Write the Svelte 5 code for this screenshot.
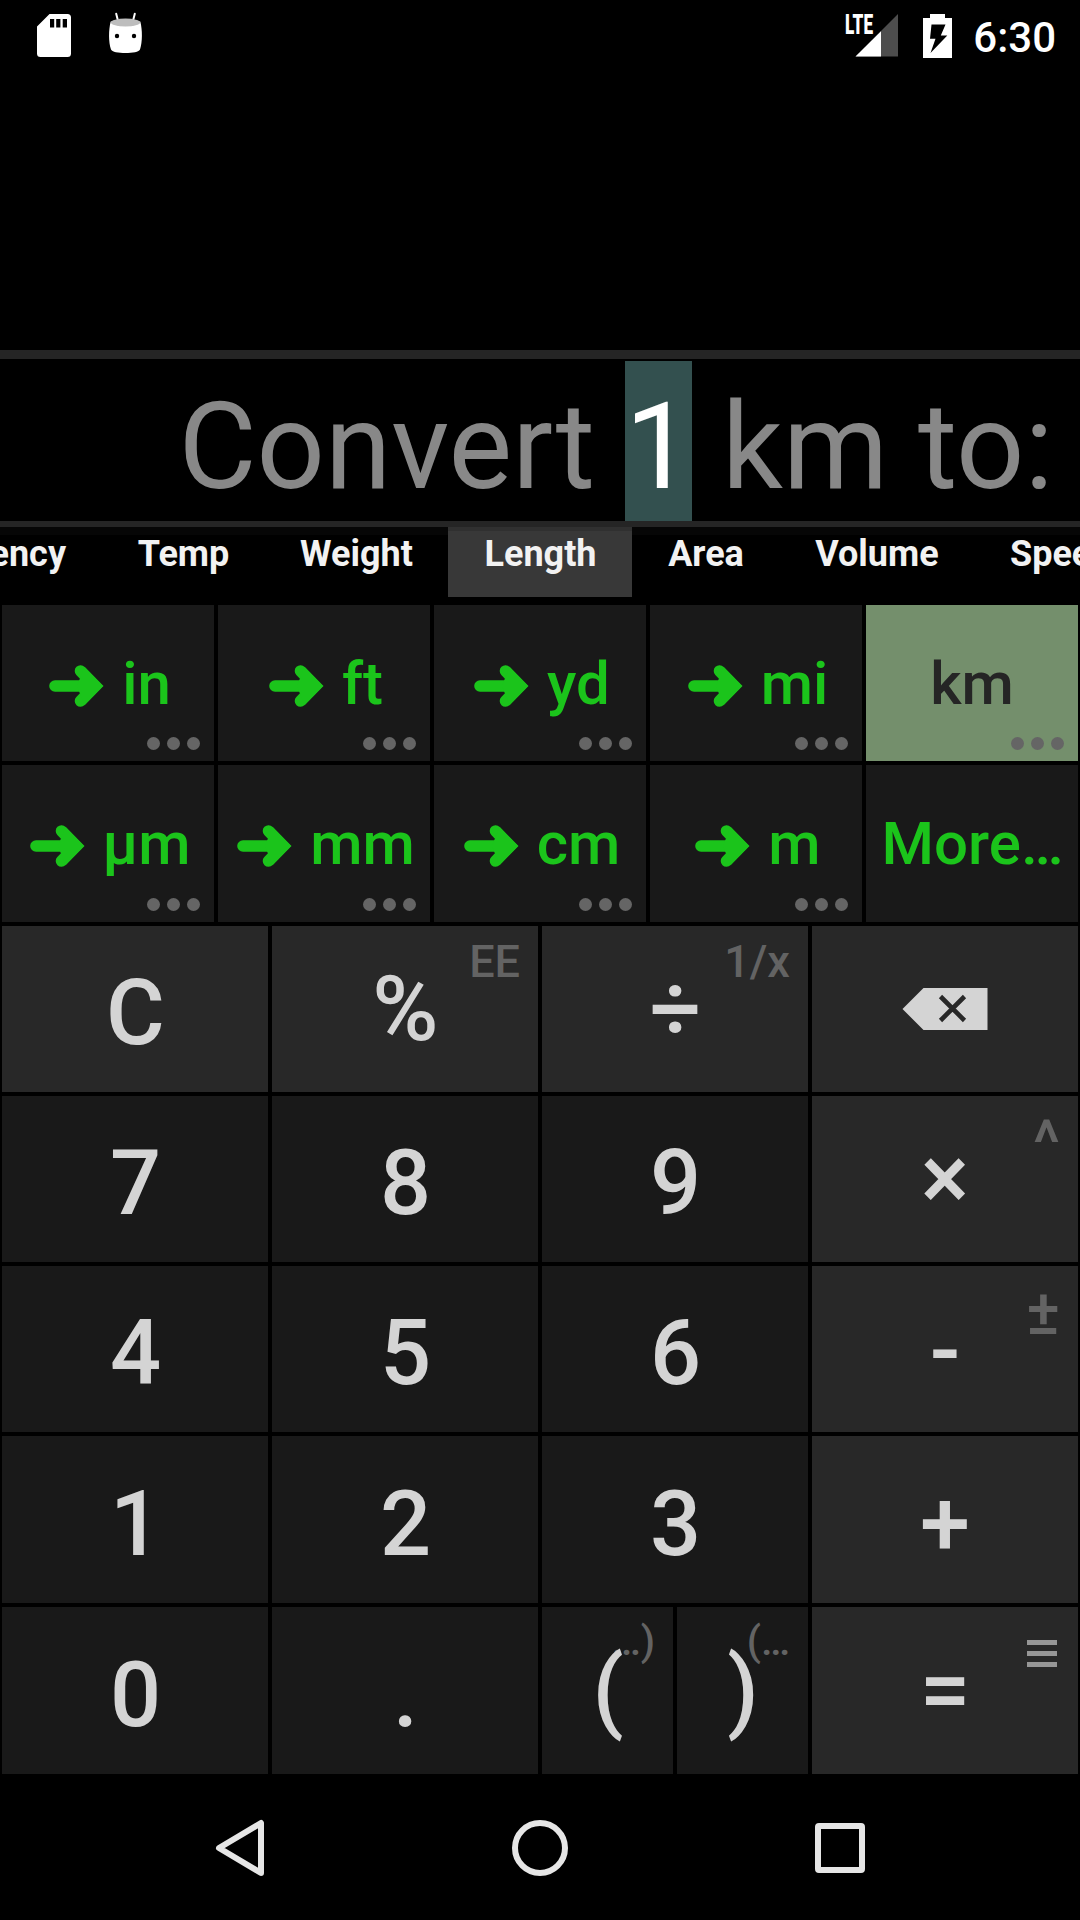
<script>
  const tabs = [
    { label: 'Currency', width: 102 },
    { label: 'Temp', width: 162 },
    { label: 'Weight', width: 184 },
    { label: 'Length', width: 184, active: true },
    { label: 'Area', width: 147 },
    { label: 'Volume', width: 195 },
    { label: 'Speed', width: 170 },
  ];

  const units = [
    { label: 'in' },
    { label: 'ft' },
    { label: 'yd' },
    { label: 'mi' },
    { label: 'km', kind: 'source' },
    { label: 'µm' },
    { label: 'mm' },
    { label: 'cm' },
    { label: 'm' },
    { label: 'More…', kind: 'more' },
  ];

  const keys = [
    { label: 'C', op: true },
    { label: '%', op: true, hint: 'EE', look: 'percent' },
    { label: '÷', op: true, hint: '1/x', look: 'divide' },
    { icon: 'backspace', op: true },
    { label: '7' },
    { label: '8' },
    { label: '9' },
    { label: '×', op: true, hint: '^', look: 'times' },
    { label: '4' },
    { label: '5' },
    { label: '6' },
    { label: '-', op: true, hint: '±', look: 'minus' },
    { label: '1' },
    { label: '2' },
    { label: '3' },
    { label: '+', op: true, look: 'plus' },
    { label: '0' },
    { label: '.' },
    { label: '(', hint: '…)', look: 'paren', half: true },
    { label: ')', hint: '(…', look: 'paren', half: true },
    { label: '=', op: true, look: 'equals', menu: true },
  ];
</script>

<div class="screen">
  <header class="status">
    <div class="notices">
      <svg class="sd" width="34" height="43" viewBox="0 0 34 43">
        <path fill="#fff" fill-rule="evenodd" d="M12.5 0H30.500a3.500 3.500 0 0 1 3.500 3.500V39.500a3.500 3.500 0 0 1-3.500 3.500H3.500A3.500 3.500 0 0 1 0 39.500V12.500ZM13 5V13.500H17.200V5ZM19.200 5V13.500H23.400V5ZM25.700 5V13.500H30V5Z" />
      </svg>
      <svg width="36" height="44" viewBox="0 0 36 44">
        <path d="M8.200 1.800 10.300 10M26.800 1.800 24.700 10" stroke="#fff" stroke-width="2" stroke-linecap="round" />
        <path fill="#fff" d="M2.700 9.500C.5 18 .5 30 3 37.500 4.500 42.300 30.500 42.300 32 37.500 34.500 30 34.500 18 32.300 9.500Z" />
        <ellipse cx="17.500" cy="10.500" rx="14.700" ry="4" fill="#bdbdbd" />
        <circle cx="9" cy="24" r="2.200" />
        <circle cx="26" cy="24" r="2.200" />
      </svg>
    </div>
    <div class="system">
      <svg width="54" height="43" viewBox="0 0 54 43">
        <path fill="#4d4d4d" d="M53 0V42.500H10.500Z" />
        <path fill="#fff" d="M36 17.300V42.500H10.500Z" />
        <text class="lte" x="0" y="20" textLength="28" lengthAdjust="spacingAndGlyphs">LTE</text>
      </svg>
      <svg class="battery" width="29" height="44" viewBox="0 0 29 44">
        <path fill="#fff" fill-rule="evenodd" d="M7 0H22V4H29V44H0V4H7ZM8.500 10.500 7 24.700H12.500L7.500 39 24.300 21.500H17.800L22.500 10.500Z" />
      </svg>
      <span class="clock">6:30</span>
    </div>
  </header>

  <section class="display">
    <span class="words">{'Convert '}</span><span class="value">1</span><span class="words">{' km to:'}</span>
  </section>

  <nav class="tabs">
    {#each tabs as tab}
      <div class="tab" class:active={tab.active} style:width="{tab.width}px"><span>{tab.label}</span></div>
    {/each}
  </nav>

  <section class="units">
    {#each units as unit}
      <div class="unit {unit.kind ?? 'target'}">
        {#if !unit.kind}
          <svg class="arrow" width="55" height="42" viewBox="0 0 55 42">
            <path d="M6 21H42M31.500 6 46 21 31.500 36" fill="none" stroke="#1bc41b" stroke-width="11.600" stroke-linecap="round" />
            <path d="M35.500 1.800 54.500 21 35.500 40.200 28 21Z" fill="#1bc41b" />
          </svg>
        {/if}
        <span>{unit.label}</span>
        {#if unit.kind !== 'more'}
          <div class="dots"><i></i><i></i><i></i></div>
        {/if}
      </div>
    {/each}
  </section>

  <section class="keys">
    {#each keys as key}
      <div class="key {key.look ?? ''}" class:op={key.op} class:half={key.half}>
        {#if key.hint}<span class="hint">{key.hint}</span>{/if}
        {#if key.menu}<div class="menu"><i></i><i></i><i></i></div>{/if}
        {#if key.icon}
          <svg width="86" height="42" viewBox="0 0 86 42">
            <path fill="#d4d4d4" d="M21.500 0H85.500V42H21.500L.5 21Z" />
            <path d="M38.500 8.500 62.500 32.500M62.500 8.500 38.500 32.500" stroke="#282828" stroke-width="4.600" />
          </svg>
        {:else}
          <span class="label">{key.label}</span>
        {/if}
      </div>
    {/each}
  </section>

  <footer class="system-nav">
    <svg width="60" height="60" viewBox="0 0 60 60"><path d="M9 30 51 5V55Z" /></svg>
    <svg width="60" height="60" viewBox="0 0 60 60"><circle cx="30" cy="30" r="25" /></svg>
    <svg width="60" height="60" viewBox="0 0 60 60"><rect x="8" y="8" width="44" height="44" rx="1" /></svg>
  </footer>
</div>

<style>
  :global(body) {
    margin: 0;
    background: #000;
  }

  .screen {
    width: 1080px;
    height: 1920px;
    overflow: hidden;
    display: flex;
    flex-direction: column;
    background: #000;
    color: #fff;
    font-family: Roboto, sans-serif;
  }

  svg {
    display: block;
    flex: none;
  }

  .status {
    height: 350px;
    box-sizing: border-box;
    padding: 12px 24px 0 37px;
    display: flex;
    justify-content: space-between;
    align-items: flex-start;
  }

  .notices {
    display: flex;
    gap: 37px;
  }

  .sd {
    margin-top: 2px;
  }

  .system {
    display: flex;
    align-items: flex-start;
    padding-top: 2px;
  }

  .system svg {
    overflow: visible;
  }

  .lte {
    font: 900 27px Roboto, sans-serif;
    fill: #fff;
  }

  .battery {
    margin: 0 21px 0 24px;
  }

  .clock {
    font-size: 42px;
    line-height: 48px;
    font-weight: 500;
  }

  .display {
    height: 162px;
    border-top: 9px solid #252525;
    border-bottom: 6px solid #252525;
    box-sizing: content-box;
    padding-right: 26.500px;
    display: flex;
    justify-content: flex-end;
    align-items: flex-end;
    font-size: 120px;
    white-space: pre;
  }

  .words,
  .value {
    height: 148px;
    line-height: 148px;
    padding-top: 12px;
  }

  .words {
    color: #888;
  }

  .value {
    background: #33504f;
  }

  .tabs {
    height: 76px;
    display: flex;
    background: linear-gradient(#060606 8px, #000 8px);
  }

  .tab {
    flex: none;
    height: 70px;
    display: flex;
    justify-content: center;
    font-size: 36px;
    font-weight: 700;
    line-height: 42px;
    color: #f2f2f2;
  }

  .tab span {
    padding: 6px 0 0 1px;
  }

  .tab:first-child {
    justify-content: flex-end;
  }

  .tab:first-child span {
    padding-right: 36px;
  }

  .tab:last-child {
    justify-content: flex-start;
  }

  .tab:last-child span {
    padding-left: 36px;
  }

  .active {
    background: linear-gradient(#303030 4px, #383838 4px);
  }

  .units {
    display: grid;
    grid-template-columns: repeat(5, 212px);
    grid-template-rows: 156px 157px;
    gap: 4px;
    padding: 2px;
  }

  .unit {
    position: relative;
    box-sizing: border-box;
    display: flex;
    align-items: center;
    justify-content: center;
    gap: 18px;
    background: #191919;
    color: #1bc41b;
    font-size: 60px;
    font-weight: 500;
  }

  .target {
    padding-left: 4px;
  }

  .more {
    padding-left: 1px;
  }

  .arrow {
    margin-top: 5px;
  }

  .source {
    background: #748f6c;
    color: #252525;
  }

  .dots {
    position: absolute;
    right: 14px;
    bottom: 11px;
    display: flex;
    gap: 7px;
  }

  .dots i {
    width: 13px;
    height: 13px;
    border-radius: 50%;
    background: #656565;
  }

  .keys {
    display: grid;
    grid-template-columns: 266px 266px 131px 131px 266px;
    grid-template-rows: 166px 166px 166px 167px 167px;
    gap: 4px;
    padding: 2px;
  }

  .key {
    position: relative;
    display: flex;
    align-items: center;
    justify-content: center;
    background: #191919;
    color: #d4d4d4;
    font-size: 90px;
    font-weight: 500;
    line-height: 106px;
  }

  .key:nth-child(4n + 3):not(.half) {
    grid-column: span 2;
  }

  .op {
    background: #282828;
  }

  .label {
    position: relative;
    padding: 10px 0 0 1px;
  }

  .percent .label,
  .divide .label {
    padding-top: 2px;
  }

  .minus .label {
    padding: 3px 0 0;
  }

  .plus .label {
    padding-left: 0;
  }

  .times .label,
  .equals .label {
    padding: 0;
  }

  .paren .label {
    padding-top: 0;
  }

  .hint {
    position: absolute;
    top: 10px;
    right: 18px;
    color: #636363;
    font-size: 45px;
    line-height: 52px;
  }

  .times .hint,
  .minus .hint {
    top: 12px;
    font-size: 63px;
    line-height: 70px;
  }

  .paren .hint {
    top: 8px;
    font-size: 41px;
  }

  .menu {
    position: absolute;
    top: 33px;
    right: 21px;
    display: grid;
    gap: 6px;
  }

  .menu i {
    width: 30px;
    height: 5px;
    background: #969696;
  }

  .system-nav {
    flex: 1;
    display: flex;
    justify-content: center;
    align-items: center;
    gap: 240px;
  }

  .system-nav svg {
    fill: none;
    stroke: #e6e6e6;
    stroke-width: 6;
    stroke-linejoin: round;
  }
</style>
